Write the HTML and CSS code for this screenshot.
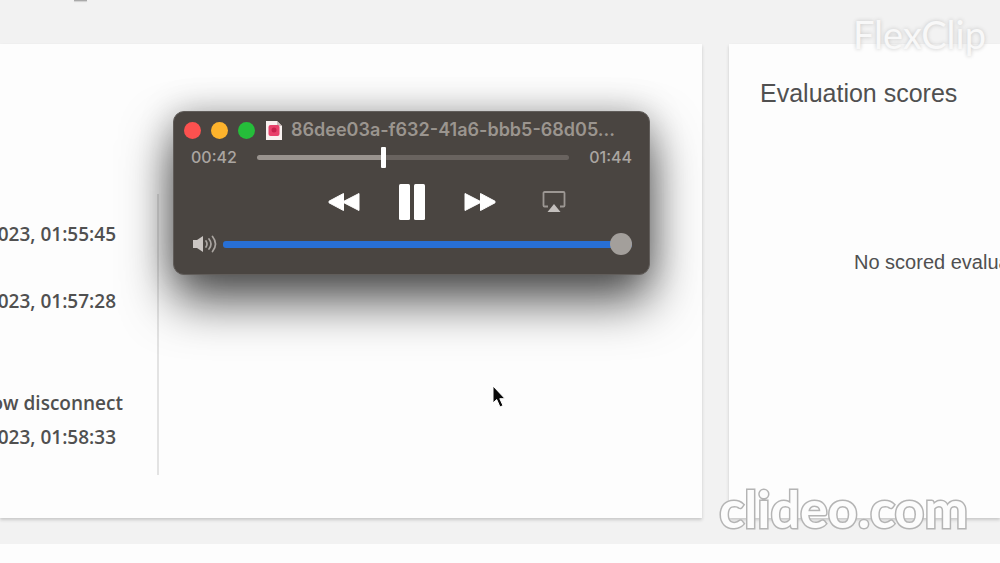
FILE: index.html
```html
<!DOCTYPE html>
<html lang="en">
<head>
<meta charset="utf-8">
<meta name="viewport" content="width=device-width, initial-scale=1">
<title>Evaluation scores</title>
<link rel="stylesheet" href="styles.css">
</head>
<body>
<header class="top"><span class="top-mark"></span></header>
<main class="panels">
  <section class="card contact">
    <div class="details">
      <p class="row">023, 01:55:45</p>
      <p class="row">023, 01:57:28</p>
      <div class="group">
        <p class="row row-reason">ow disconnect</p>
        <p class="row">023, 01:58:33</p>
      </div>
    </div>
  </section>
  <section class="card scores">
    <h2 class="scores-title">Evaluation scores</h2>
    <p class="scores-empty">No scored evaluations</p>
  </section>
</main>
<footer class="bottom"></footer>

<section class="player" aria-label="Audio player">
  <div class="titlebar">
    <button class="dot dot-close" aria-label="Close"></button>
    <button class="dot dot-min" aria-label="Minimize"></button>
    <button class="dot dot-zoom" aria-label="Zoom"></button>
    <svg class="file" width="18" height="21" viewBox="0 0 18 21" aria-hidden="true"><path d="M1 1h11l5 5v14H1z" fill="#f8f1ef"/><path d="M12 1v5h5z" fill="#c9bcb9"/><rect x="3.500" y="5" width="11" height="11" rx="2" fill="#e8416a"/><circle cx="9" cy="10" r="2.500" fill="#c9204c"/></svg>
    <span class="title">86dee03a-f632-41a6-bbb5-68d05...</span>
  </div>
  <div class="seek">
    <span class="time">00:42</span>
    <input class="seek-range" type="range" min="0" max="104" value="42" aria-label="Position">
    <span class="time">01:44</span>
  </div>
  <div class="controls">
    <button class="ctl" aria-label="Rewind"><svg width="32" height="20" viewBox="0 0 32 20"><path d="M15.500 1.500v17L1 10.800v-1.600zM31 1.500v17L16 10.800v-1.600z" fill="#fff" stroke="#fff" stroke-linejoin="round"/></svg></button>
    <button class="ctl" aria-label="Pause"><svg width="28" height="38" viewBox="0 0 28 38"><rect x="1" y="1" width="11" height="36" rx="1.500" fill="#fff"/><rect x="16" y="1" width="11" height="36" rx="1.500" fill="#fff"/></svg></button>
    <button class="ctl" aria-label="Fast forward"><svg width="32" height="20" viewBox="0 0 32 20"><path d="M1 1.500v17l15-7.700v-1.600zM16.500 1.500v17L31 10.800v-1.600z" fill="#fff" stroke="#fff" stroke-linejoin="round"/></svg></button>
    <button class="ctl ctl-air" aria-label="AirPlay"><svg width="24" height="24" viewBox="0 0 24 24"><path d="M6 16.500H2.500A1 1 0 0 1 1.500 15.500V3A1 1 0 0 1 2.500 2h19a1 1 0 0 1 1 1v12.500a1 1 0 0 1-1 1H18" fill="none" stroke="#9c9793" stroke-width="1.800"/><path d="M12 14l6.500 8h-13z" fill="#c3bfbc"/></svg></button>
  </div>
  <div class="volume">
    <svg width="26" height="18" viewBox="0 0 26 18" aria-hidden="true"><path d="M2 5h4L12 1v16L6 13H2z" fill="#cbc6c3"/><path d="M15 6q2 3 0 6M18 4q4 5 0 10M21.500 1.500q6 7.500 0 15" fill="none" stroke="#aaa5a1" stroke-width="1.700" stroke-linecap="round"/></svg>
    <input class="volume-range" type="range" min="0" max="100" value="100" aria-label="Volume">
  </div>
</section>

<svg class="pointer" width="16" height="24" viewBox="0 0 16 24" aria-hidden="true"><path d="M2 1v17l3.700-3.500L9 22l3-1.400-3.200-6.900H14z" fill="#090909" stroke="#fff" stroke-width="1"/></svg>
<div class="mark mark-flex">FlexClip</div>
<div class="mark mark-clideo">clideo.com</div>
</body>
</html>
```
FILE: styles.css
```css
* { box-sizing: border-box; }
body {
  margin: 0;
  min-height: 100vh;
  display: flex;
  flex-direction: column;
  position: relative;
  overflow: hidden;
  background: #f2f2f2;
  color: #505050;
  font-family: "Liberation Sans", Arial, sans-serif;
}
p, h2 { margin: 0; }
button { border: 0; padding: 0; background: none; }

.top { height: 44px; padding-left: 74px; }
.top-mark {
  display: block;
  width: 13px;
  height: 1px;
  background: #aaa;
  box-shadow: 0 1px 1px #ccc;
}
.panels {
  display: grid;
  grid-template-columns: 702fr 271fr;
  gap: 27px;
}
.card {
  min-width: 0;
  background: #fdfdfd;
  box-shadow: 0 2px 3px #c8c8c8;
  overflow: hidden;
}
.contact { padding: 150px 0 43px; }
.details {
  display: flex;
  flex-direction: column;
  gap: 40px;
  width: 159px;
  padding: 27px 41px 24px 0;
  border-right: 2px solid #e3e3e3;
}
.row {
  display: flex;
  justify-content: flex-end;
  white-space: nowrap;
  font: 600 19px/27px "Open Sans", "Noto Sans", sans-serif;
}
.row-reason { margin-right: -7px; }
.group {
  display: flex;
  flex-direction: column;
  gap: 7px;
  padding-top: 35px;
}
.scores { padding: 35px 0 0 31px; }
.scores-title { font-size: 25px; line-height: 28px; font-weight: 400; }
.scores-empty {
  padding: 143px 0 0 94px;
  font-size: 20px;
  line-height: 24px;
  white-space: nowrap;
}
.bottom { flex: 1; margin-top: 26px; background: #fdfdfd; }

.player {
  position: absolute;
  left: 173px;
  top: 111px;
  width: 477px;
  padding: 7px 17px 17px;
  border-radius: 11px;
  background: #4a4541;
  border: 1px solid #615d5a;
  box-shadow: 0 26px 50px rgba(0, 0, 0, .68), 0 0 34px rgba(0, 0, 0, .22);
  color: #aaa5a1;
  font-family: Inter, "Liberation Sans", sans-serif;
}
.titlebar {
  display: flex;
  align-items: center;
  height: 22px;
  margin-left: -7px;
}
.dot {
  width: 17px;
  height: 17px;
  margin-right: 10px;
  border-radius: 50%;
}
.dot-close { background: #fc514f; }
.dot-min { background: #fdb32c; }
.dot-zoom { background: #25bd3a; }
.title {
  margin-left: 8px;
  font-size: 18px;
  line-height: 22px;
  font-weight: 600;
  white-space: nowrap;
  color: #9b958f;
}
.seek {
  display: flex;
  align-items: center;
  justify-content: space-between;
  gap: 20px;
  height: 32px;
}
.time { font-size: 16px; line-height: 24px; font-weight: 500; }
input[type="range"] {
  -webkit-appearance: none;
  appearance: none;
  flex: 1;
  min-width: 0;
  margin: 0;
  border-radius: 3px;
}
.seek-range {
  height: 5px;
  background: linear-gradient(to right, #99938e 40%, #69635f 40%);
}
.seek-range::-webkit-slider-thumb {
  -webkit-appearance: none;
  width: 5px;
  height: 21px;
  border-radius: 1px;
  background: #fff;
}
.controls {
  display: flex;
  align-items: center;
  gap: 38px;
  height: 58px;
  padding-left: 137px;
}
.ctl { display: flex; }
.ctl-air { margin-left: 8px; }
.volume {
  display: flex;
  align-items: center;
  gap: 6px;
  height: 26px;
}
.volume-range { height: 7px; background: #286fd4; }
.volume-range::-webkit-slider-thumb {
  -webkit-appearance: none;
  width: 22px;
  height: 22px;
  border-radius: 50%;
  background: #a39f9b;
}
.pointer { position: absolute; left: 491px; top: 385px; }

.mark { position: absolute; white-space: nowrap; line-height: 1; }
.mark-flex {
  right: 14px;
  top: 15px;
  color: #f8f8f8;
  font-family: Lato, sans-serif;
  font-size: 38px;
  text-shadow: 0 0 4px #c4c4c4;
}
.mark-clideo {
  right: 32px;
  top: 482px;
  color: #fcfcfc;
  font-family: Lato, sans-serif;
  font-size: 52px;
  font-weight: 700;
  -webkit-text-stroke: 3px #b4b4b4;
  paint-order: stroke fill;
}
```
